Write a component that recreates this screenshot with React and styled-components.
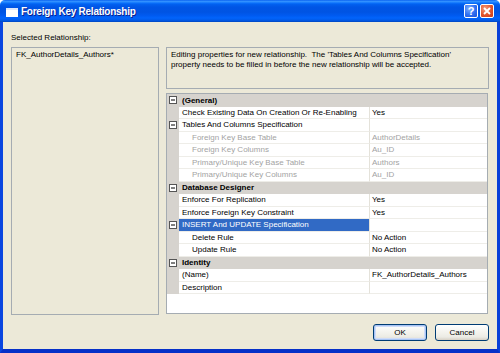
import styled, { createGlobalStyle } from "styled-components";

const FONT = `"Liberation Sans", Arial, sans-serif`;

const GlobalStyle = createGlobalStyle`
    html, body {
        margin: 0;
        padding: 0;
        background: #ffffff;
    }
    body {
        font-family: ${FONT};
        font-size: 8px;
        color: #000;
    }
`;

const rows = [
    { type: "cat", name: "(General)" },
    { name: "Check Existing Data On Creation Or Re-Enabling", value: "Yes" },
    { name: "Tables And Columns Specification", value: "", expander: true },
    { name: "Foreign Key Base Table", value: "AuthorDetails", sub: true, disabled: true },
    { name: "Foreign Key Columns", value: "Au_ID", sub: true, disabled: true },
    { name: "Primary/Unique Key Base Table", value: "Authors", sub: true, disabled: true },
    { name: "Primary/Unique Key Columns", value: "Au_ID", sub: true, disabled: true },
    { type: "cat", name: "Database Designer" },
    { name: "Enforce For Replication", value: "Yes" },
    { name: "Enforce Foreign Key Constraint", value: "Yes" },
    { name: "INSERT And UPDATE Specification", value: "", expander: true, selected: true },
    { name: "Delete Rule", value: "No Action", sub: true },
    { name: "Update Rule", value: "No Action", sub: true },
    { type: "cat", name: "Identity" },
    { name: "(Name)", value: "FK_AuthorDetails_Authors" },
    { name: "Description", value: "" },
];

function Expander() {
    return (
        <svg width="8" height="8" viewBox="0 0 8 8">
            <rect x="0.5" y="0.5" width="7" height="7" fill="#fff" stroke="#555" />
            <line x1="2" y1="4" x2="6" y2="4" stroke="#000" />
        </svg>
    );
}

function App() {
    return (
        <>
            <GlobalStyle />
            <Window>
                <TitleBar>
                    <TitleIcon>
                        <svg width="12" height="9" viewBox="0 0 12 9">
                            <rect x="0" y="0" width="12" height="9" fill="#ffffff" />
                            <rect x="0" y="0" width="12" height="2" fill="#dfe8fb" />
                        </svg>
                    </TitleIcon>
                    <TitleText>Foreign Key Relationship</TitleText>
                    <CaptionButton $kind="help">?</CaptionButton>
                    <CaptionButton $kind="close">
                        <svg width="8" height="8" viewBox="0 0 8 8">
                            <path d="M1 1 L7 7 M7 1 L1 7" stroke="#fff" strokeWidth="1.8" />
                        </svg>
                    </CaptionButton>
                </TitleBar>
                <Client>
                    <Label>Selected Relationship:</Label>
                    <Main>
                        <ListBox>
                            <ListItem>FK_AuthorDetails_Authors*</ListItem>
                        </ListBox>
                        <RightColumn>
                            <Description>
                                Editing properties for new relationship.&nbsp; The 'Tables And Columns Specification'
                                <br />
                                property needs to be filled in before the new relationship will be accepted.
                            </Description>
                            <Grid>
                                {rows.map((r, i) =>
                                    r.type === "cat" ? (
                                        <CatRow key={i}>
                                            <Gutter><Expander /></Gutter>
                                            <CatName>{r.name}</CatName>
                                        </CatRow>
                                    ) : (
                                        <PropRow key={i}>
                                            <Gutter>{r.expander && <Expander />}</Gutter>
                                            <NameCell $sub={r.sub} $disabled={r.disabled} $selected={r.selected}>
                                                {r.name}
                                            </NameCell>
                                            <ValueCell $disabled={r.disabled}>{r.value}</ValueCell>
                                        </PropRow>
                                    )
                                )}
                                <GridFill />
                            </Grid>
                        </RightColumn>
                    </Main>
                    <Footer>
                        <Button $default>OK</Button>
                        <Button>Cancel</Button>
                    </Footer>
                </Client>
            </Window>
        </>
    );
}

const Window = styled.div`
    width: 500px;
    height: 353px;
    display: flex;
    flex-direction: column;
    overflow: hidden;
    border-radius: 5px 5px 0 0;
`;

const TitleBar = styled.div`
    height: 22px;
    flex: none;
    display: flex;
    align-items: center;
    padding: 0 6px 0 6px;
    background: linear-gradient(to bottom,
        #0058ee 0%, #3593ff 5%, #2a8cff 9%, #0a70fb 14%, #0260ef 20%,
        #0055e5 32%, #0054e3 55%, #005af0 70%, #0264fb 82%, #0059e8 92%, #0046c0 100%);
`;

const TitleIcon = styled.div`
    width: 12px;
    height: 9px;
    margin-top: 2px;
    display: flex;
`;

const TitleText = styled.div`
    margin-left: 3px;
    flex: 1;
    color: #ffffff;
    font-family: ${FONT};
    font-weight: bold;
    font-size: 10px;
    letter-spacing: -0.25px;
    text-shadow: 1px 1px 0 #0a1e8c;
`;

const CaptionButton = styled.div`
    width: 14px;
    height: 14px;
    margin-left: 2px;
    box-sizing: border-box;
    border: 1px solid #fff;
    border-radius: 2px;
    display: flex;
    align-items: center;
    justify-content: center;
    color: #fff;
    font-family: ${FONT};
    font-weight: bold;
    font-size: 11px;
    background: ${(p) =>
        p.$kind === "close"
            ? "radial-gradient(circle at 35% 30%, #f29d7e 0%, #e2542c 55%, #c7391a 100%)"
            : "radial-gradient(circle at 35% 30%, #7fb0ff 0%, #2f6ff2 55%, #1c52d8 100%)"};
`;

const Client = styled.div`
    flex: 1;
    display: flex;
    flex-direction: column;
    background: #ece9d8;
    border-left: 3px solid #0a46e0;
    border-right: 3px solid #0840d8;
    border-bottom: 4px solid #0630c8;
    padding: 10px 8px 8px 8px;
    min-height: 0;
`;

const Label = styled.div`
    height: 12px;
    line-height: 12px;
    margin-bottom: 3px;
`;

const Main = styled.div`
    display: flex;
    gap: 7px;
    height: 268px;
`;

const ListBox = styled.div`
    width: 148px;
    box-sizing: border-box;
    border: 1px solid #a5acb2;
    background: #ece9d8;
    padding: 1px 4px;
`;

const ListItem = styled.div`
    line-height: 11px;
`;

const RightColumn = styled.div`
    flex: 1;
    display: flex;
    flex-direction: column;
    gap: 4px;
`;

const Description = styled.div`
    height: 42px;
    box-sizing: border-box;
    border: 1px solid #a5acb2;
    padding: 2px 4px;
    line-height: 10px;
    white-space: nowrap;
`;

const Grid = styled.div`
    height: 221px;
    box-sizing: border-box;
    border: 1px solid #a5acb2;
    background: #ffffff;
    display: flex;
    flex-direction: column;
    margin-right: 1px;
`;

const RowBase = styled.div`
    height: 12.5px;
    flex: none;
    display: flex;
    align-items: stretch;
`;

const CatRow = styled(RowBase)`
    background: #d6d3ce;
`;

const PropRow = styled(RowBase)``;

const Gutter = styled.div`
    width: 12px;
    flex: none;
    background: #d6d3ce;
    display: flex;
    align-items: center;
    justify-content: center;
`;

const CatName = styled.div`
    flex: 1;
    padding-left: 3px;
    font-weight: bold;
    display: flex;
    align-items: center;
`;

const NameCell = styled.div`
    width: 191px;
    flex: none;
    box-sizing: border-box;
    padding-left: ${(p) => (p.$sub ? 13 : 3)}px;
    display: flex;
    align-items: center;
    border-right: 1px solid #e4e2da;
    border-bottom: 1px solid #eeede8;
    color: ${(p) => (p.$selected ? "#fff" : p.$disabled ? "#a3a3a3" : "#000")};
    background: ${(p) => (p.$selected ? "#316ac5" : "#fff")};
    white-space: nowrap;
`;

const ValueCell = styled.div`
    flex: 1;
    padding-left: 2px;
    display: flex;
    align-items: center;
    border-bottom: 1px solid #eeede8;
    color: ${(p) => (p.$disabled ? "#a3a3a3" : "#000")};
    white-space: nowrap;
`;

const GridFill = styled.div`
    flex: 1;
    background: #fff;
`;

const Footer = styled.div`
    margin-top: 9px;
    display: flex;
    justify-content: flex-end;
    gap: 8px;
`;

const Button = styled.button`
    width: 54px;
    height: 17px;
    box-sizing: border-box;
    border: 1px solid #003c74;
    border-radius: 3px;
    font-family: ${FONT};
    font-size: 8px;
    color: #000;
    padding: 0;
    background: linear-gradient(to bottom, #ffffff 0%, #f6f5f0 40%, #ecebe4 80%, #d6d0c5 100%);
    box-shadow: ${(p) =>
        p.$default ? "inset 0 0 0 1px #a8c4f4, inset 0 0 0 2px #cfdcf8" : "none"};
`;

export default App;
